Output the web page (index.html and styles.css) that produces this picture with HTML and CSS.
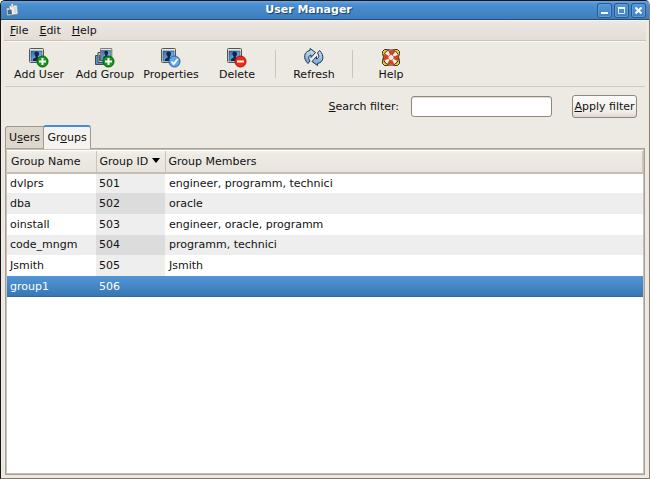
FILE: index.html
```html
<!DOCTYPE html>
<html lang="en">
<head>
<meta charset="utf-8">
<title>User Manager</title>
<link rel="stylesheet" href="styles.css">
</head>
<body>
<svg class="defs" aria-hidden="true">
  <defs>
    <linearGradient id="sky" x1="0" y1="0" x2="1" y2="1"><stop offset="0" stop-color="#2f69ad"/><stop offset="1" stop-color="#a2caed"/></linearGradient>
    <linearGradient id="arrow" x1="0" y1="0" x2="0" y2="1"><stop offset="0" stop-color="#d0e4f5"/><stop offset="1" stop-color="#6b9fd6"/></linearGradient>
    <symbol id="card" viewBox="0 0 16 16">
      <rect x=".5" y=".5" width="14" height="14" rx="1" fill="#e6e7df" stroke="#55564f"/>
      <rect x="2" y="3" width="11" height="10" fill="url(#sky)" stroke="#244c7b" stroke-width=".6"/>
      <path d="M7.500 3.500c-2 0-2.400 1.700-1.900 3.500l1 1.500v1L4 11v2h7.500v-2L8.900 9.500v-1l1-1.500C10.400 5 9.500 3.500 7.500 3.500z" fill="#0c2852"/>
    </symbol>
  </defs>
</svg>
<div class="window">
  <header class="titlebar">
    <svg class="app-icon" viewBox="0 0 14 14" aria-hidden="true">
      <path d="M1 5l7-1 1 8-7 1z" fill="#d2dadd" stroke="#506477" stroke-width=".6"/>
      <path d="M4 3l8-1 1 9-7 1z" fill="#f3f4f2" stroke="#75818b" stroke-width=".6"/>
      <path d="M6 1l2-.5.5 3-2 .5z" fill="#f4f4f4" stroke="#75818b" stroke-width=".4"/>
      <path d="M2.500 7l4-.5.500 4.500-4 .5z" fill="#456989"/>
      <path d="M8.500 5h3M8.500 7h3M8.500 9h3" stroke="#b5bcc3"/>
    </svg>
    <h1>User Manager</h1>
    <div class="controls">
      <button aria-label="Minimize"><svg viewBox="0 0 15 15"><path d="M4 10h7" stroke="#fff" stroke-width="2"/></svg></button>
      <button aria-label="Maximize"><svg viewBox="0 0 15 15"><path d="M4.500 4.500h6v6h-6z" fill="none" stroke="#e4f2ff"/><path d="M4 5h7" stroke="#fff" stroke-width="2"/></svg></button>
      <button aria-label="Close"><svg viewBox="0 0 15 15"><path d="M4.500 4.500l6 6m0-6l-6 6" stroke="#fff" stroke-width="2"/></svg></button>
    </div>
  </header>
  <nav class="menubar">
    <button><u>F</u>ile</button><button><u>E</u>dit</button><button><u>H</u>elp</button>
  </nav>
  <div class="toolbar" role="toolbar">
    <button>
      <svg viewBox="0 0 20 20"><use href="#card" x="0" y="0" width="16" height="16"/><circle cx="13.500" cy="13.500" r="5.500" fill="#18991b" stroke="#075b0a"/><path d="M10 13.500h7M13.500 10v7" stroke="#fff" stroke-width="2"/></svg>
      <span>Add User</span>
    </button>
    <button>
      <svg viewBox="0 0 20 20"><path d="M.5 7.500h8v9h-8z" fill="#5f93c5" stroke="#454a4c"/><path d="M3 4.500h8v10H3z" fill="#bac8d0" stroke="#454a4c"/><path d="M4 7h5v6H4z" fill="#326399"/><use href="#card" x="5" y="0" width="13" height="13"/><circle cx="13.500" cy="13.500" r="5.500" fill="#18991b" stroke="#075b0a"/><path d="M10 13.500h7M13.500 10v7" stroke="#fff" stroke-width="2"/></svg>
      <span>Add Group</span>
    </button>
    <button>
      <svg viewBox="0 0 20 20"><use href="#card" x="0" y="0" width="16" height="16"/><circle cx="13.500" cy="13.500" r="5.500" fill="#62a8e8" stroke="#285d99"/><path d="M10.500 13.500l2.200 2.500 4-5" fill="none" stroke="#fff" stroke-width="1.800"/></svg>
      <span>Properties</span>
    </button>
    <button>
      <svg viewBox="0 0 20 20"><use href="#card" x="0" y="0" width="16" height="16"/><circle cx="13.500" cy="13.500" r="5.500" fill="#ed2b17" stroke="#a31309"/><path d="M10 13.500h7" stroke="#fff" stroke-width="2"/></svg>
      <span>Delete</span>
    </button>
    <i class="divider"></i>
    <button>
      <svg viewBox="0 0 20 20"><g fill="url(#arrow)" stroke="#1c3350" stroke-linejoin="round"><path d="M4 15.500C-1 11-.5 3.500 6 2.500V.500l5.500 4-4.500 5V7C4.500 7.500 4 10.500 6 13z"/><path d="M15.500 2.500c5 4.500 4.500 12-2 13v2l-5.500-4 4.500-5V11c2.500-.5 3-3.500 1-6z"/></g></svg>
      <span>Refresh</span>
    </button>
    <i class="divider"></i>
    <button>
      <svg viewBox="0 0 20 20"><path d="M1.500 3.500l2-2h3l3.500 1 3.500-1h3l2 2v2l-1 3.500 1 3.500v3l-2 2h-3l-3.500-1-3.500 1h-3l-2-2v-3l1-3.500-1-3.500z" fill="#e8ca35" stroke="#3a3016"/><circle cx="10" cy="9.500" r="5" fill="none" stroke="#4a1d14" stroke-width="6"/><circle cx="10" cy="9.500" r="5" fill="none" stroke="#fff3e5" stroke-width="4.500"/><circle cx="10" cy="9.500" r="5" fill="none" stroke="#dc3f1c" stroke-width="4.500" stroke-dasharray="5.050 2.800" stroke-dashoffset="2.520"/><circle cx="10" cy="9.500" r="2.500" fill="#edeae3"/></svg>
      <span>Help</span>
    </button>
  </div>
  <form class="filter">
    <label for="search"><u>S</u>earch filter:</label>
    <input id="search" type="text">
    <button type="button"><u>A</u>pply filter</button>
  </form>
  <main>
    <div class="tabs" role="tablist">
      <button role="tab" aria-selected="false">U<u>s</u>ers</button><button role="tab" aria-selected="true">Gr<u>o</u>ups</button>
    </div>
    <section class="panel" role="tabpanel">
      <table>
        <colgroup><col class="name"><col class="gid"><col></colgroup>
        <thead><tr><th>Group Name</th><th>Group ID <svg class="sort" viewBox="0 0 8 5"><path d="M0 0h8L4 5z"/></svg></th><th>Group Members</th></tr></thead>
        <tbody>
          <tr><td>dvlprs</td><td>501</td><td>engineer, programm, technici</td></tr>
          <tr><td>dba</td><td>502</td><td>oracle</td></tr>
          <tr><td>oinstall</td><td>503</td><td>engineer, oracle, programm</td></tr>
          <tr><td>code_mngm</td><td>504</td><td>programm, technici</td></tr>
          <tr><td>Jsmith</td><td>505</td><td>Jsmith</td></tr>
          <tr class="selected"><td>group1</td><td>506</td><td></td></tr>
        </tbody>
      </table>
    </section>
  </main>
</div>
</body>
</html>
```
FILE: styles.css
```css
* { box-sizing: border-box; }

body {
  margin: 0;
  background: #fff;
  color: #111;
  font: 11px/14px "DejaVu Sans", sans-serif;
}

button, input {
  margin: 0;
  padding: 0;
  border: 0;
  background: none;
  color: inherit;
  font: inherit;
}

svg { display: block; }

.defs {
  position: absolute;
  width: 0;
  height: 0;
}

u { text-underline-offset: 1px; }

.window {
  display: flex;
  flex-direction: column;
  height: 100vh;
  overflow: hidden;
  border: 1px solid #191416;
  border-right-color: #887c76;
  border-bottom-color: #81776e;
  border-radius: 5px 5px 0 0;
  background: #edeae3;
}

.titlebar {
  display: grid;
  grid-template-columns: 27px 1fr 60px;
  align-items: center;
  height: 19px;
  flex: none;
  border-bottom: 1px solid #244b76;
  background: linear-gradient(#68a7e2, #4a8fd1 20%, #3d7ebd);
}

.app-icon {
  width: 14px;
  height: 14px;
  margin-left: 4px;
}

h1 {
  margin: 0;
  color: #fff;
  font-size: 11px;
  text-align: center;
  text-shadow: 1px 1px 1px #173d69;
}

.controls {
  display: flex;
  justify-content: flex-end;
  gap: 2px;
  padding-right: 3px;
}

.controls button {
  width: 15px;
  height: 15px;
  border-radius: 3px;
  background: linear-gradient(#5799da, #3d7fc1);
  box-shadow: inset 0 0 0 1px #28588c, inset 0 0 0 2px #5f9dd8;
}

.controls svg {
  width: 15px;
  height: 15px;
}

.menubar {
  display: flex;
  gap: 11px;
  flex: none;
  height: 21px;
  margin: 0 3px;
  padding: 0 6px;
  border-top: 1px solid #f8f4ef;
  border-bottom: 1px solid #cdc0b7;
  background: linear-gradient(#ece7e1, #e4ddd6);
}

.toolbar {
  display: flex;
  flex: none;
  height: 46px;
  margin: 0 4px;
  padding: 6px 0 0 1px;
  border-top: 1px solid #f9f7f3;
  border-bottom: 1px solid #d1cac0;
}

.toolbar button {
  display: flex;
  flex-direction: column;
  align-items: center;
  width: 66px;
}

.toolbar svg {
  width: 20px;
  height: 20px;
}

.divider {
  width: 1px;
  height: 28px;
  margin: 2px 5px 0;
  background: #c9c4bd;
}

.filter {
  display: flex;
  align-items: center;
  justify-content: flex-end;
  flex: none;
  height: 39px;
  padding-right: 12px;
}

.filter input {
  width: 141px;
  height: 21px;
  margin: 0 20px 0 12px;
  padding: 0 4px;
  border: 1px solid #92877c;
  border-radius: 3px;
  background: #fff;
  box-shadow: inset 0 1px 1px #ddd9d4;
}

.filter button {
  width: 65px;
  height: 23px;
  border: 1px solid #92867a;
  border-radius: 3px;
  background: linear-gradient(#fcfbf9, #f0ede8 75%, #dfd7cf);
  white-space: nowrap;
}

main {
  display: flex;
  flex: 1;
  flex-direction: column;
  min-height: 0;
  padding: 0 4px 3px;
}

.tabs {
  display: flex;
  align-items: flex-end;
  flex: none;
  height: 22px;
}

.tabs button {
  width: 39px;
  height: 22px;
  border: 1px solid #a2988d;
  border-bottom: 0;
  border-radius: 3px 0 0;
  background: #ddd6cc;
}

.tabs button[aria-selected="true"] {
  z-index: 1;
  width: 48px;
  height: 24px;
  margin: 0 0 -1px -1px;
  border-top: 2px solid #498dce;
  border-radius: 3px 3px 0 0;
  background: #f5f3ef;
}

.panel {
  flex: 1;
  min-height: 0;
  border: 1px solid #a99f92;
  background: #fff;
  box-shadow: inset 0 0 0 1px #c9c0b5;
  padding: 2px 1px;
}

table {
  width: 100%;
  border-collapse: collapse;
  table-layout: fixed;
}

.name { width: 89px; }
.gid { width: 69px; }

th, td {
  padding: 0 4px;
  font-weight: normal;
  text-align: left;
  white-space: nowrap;
}

th {
  height: 22px;
  border-right: 1px solid #cbc4bb;
  border-bottom: 2px solid #c7beb2;
  background: linear-gradient(#f3f1ec, #edeae3 20%, #e9e5de);
}

th + th { padding: 0 3px; }

.sort {
  display: inline-block;
  width: 8px;
  height: 5px;
  vertical-align: 2px;
}

td { height: 21px; }
td:first-child { padding-left: 3px; }
tr:nth-child(3n+1) td { height: 20px; }
tbody td:nth-child(2) { padding-left: 3px; background: #eee; }
tbody tr:nth-child(even) { background: #eee; }
tbody tr:nth-child(even) td:nth-child(2) { background: #dcdcdc; }

tbody tr.selected {
  background: linear-gradient(#5196d6, #3a78b6 92%, #2d669f);
  color: #fff;
}

tbody tr.selected td:nth-child(2) { background: none; }
```
